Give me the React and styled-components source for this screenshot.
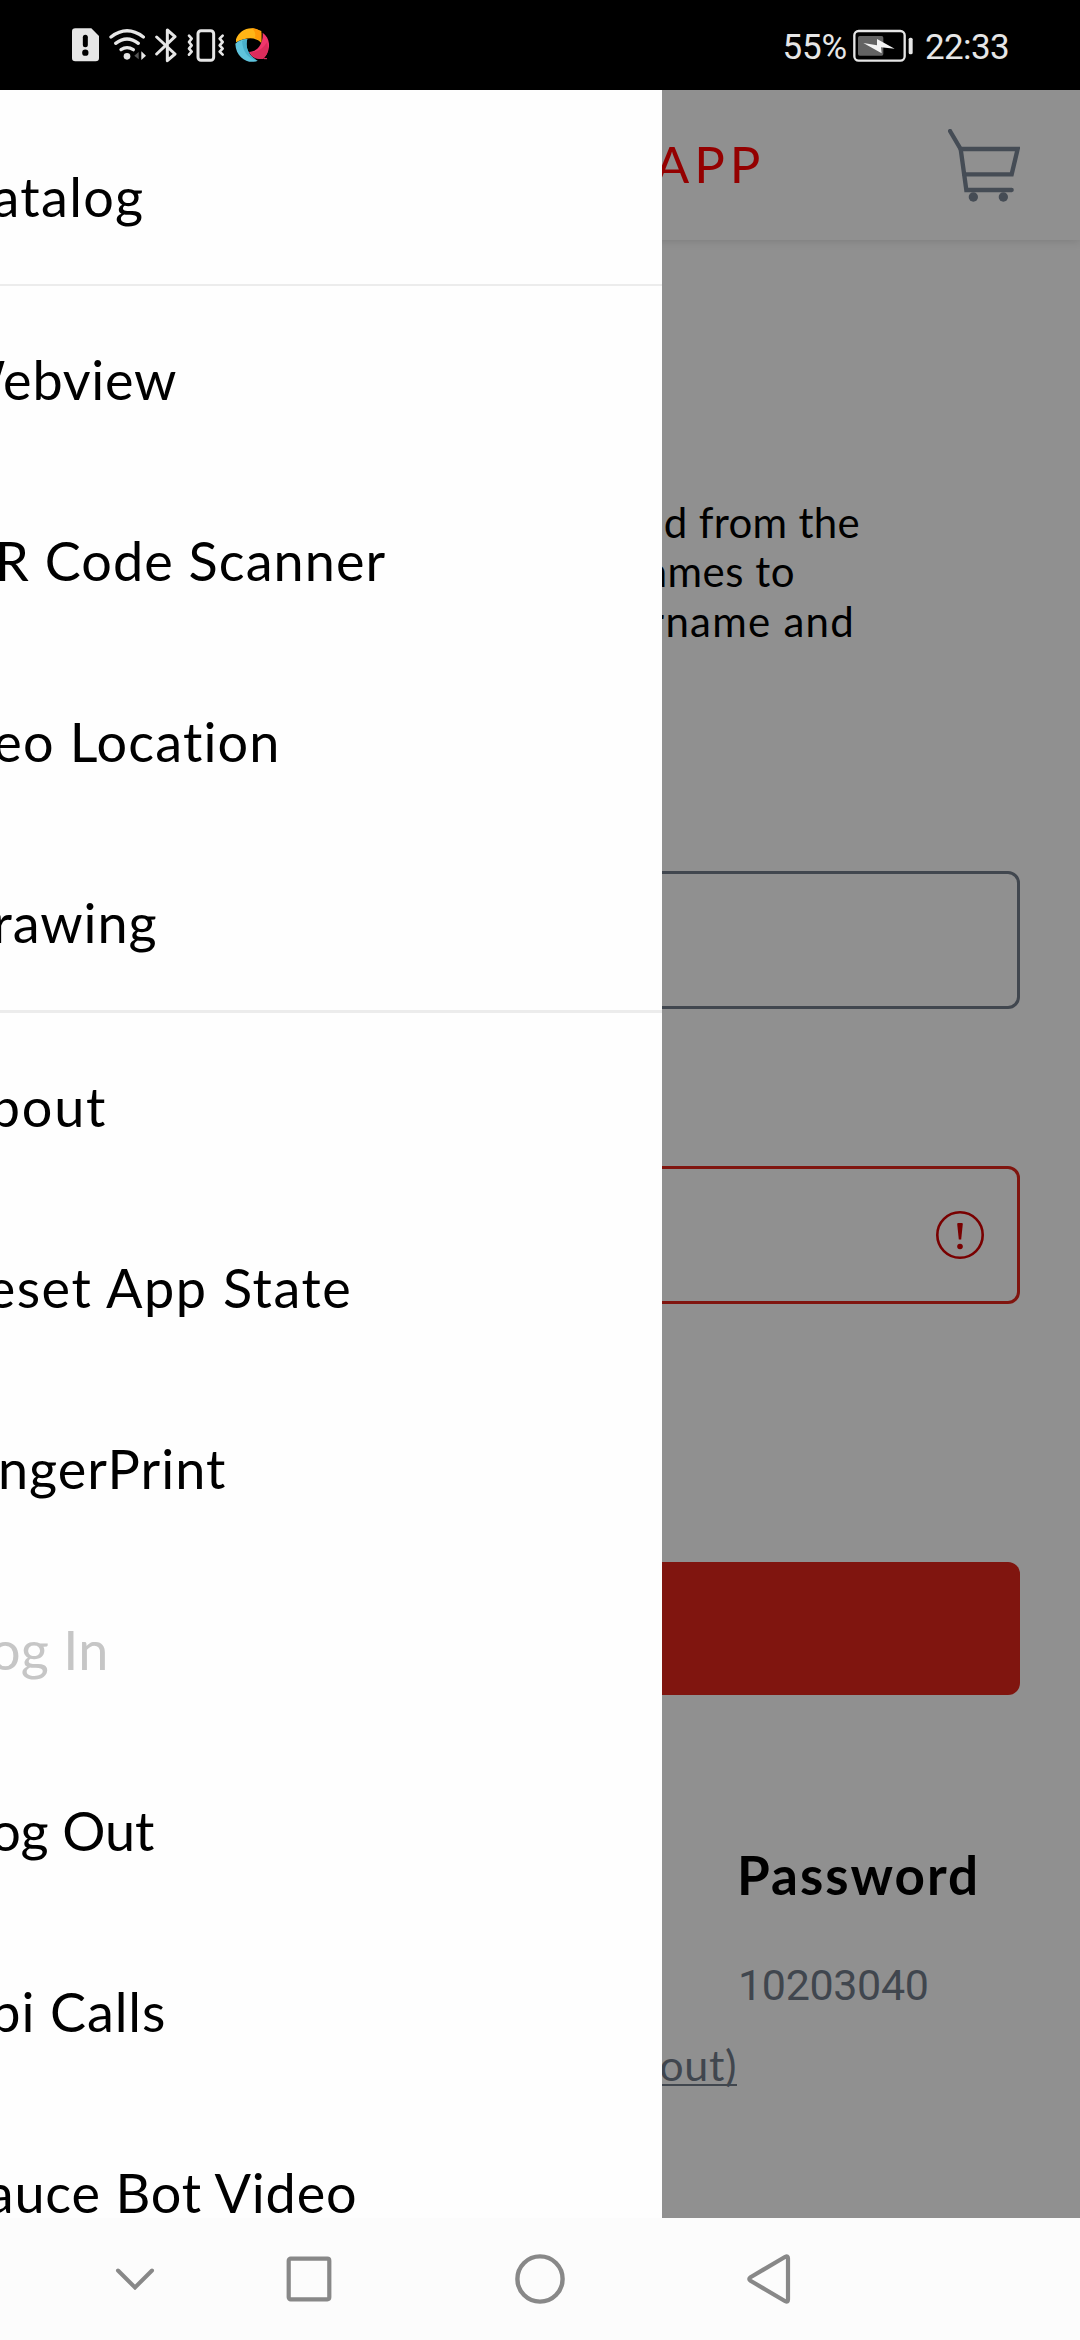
import React from 'react';
import styled, { createGlobalStyle } from 'styled-components';

const GlobalStyle = createGlobalStyle`
  * { box-sizing: border-box; }
  body { margin: 0; background: #000; }
  svg { display: block; flex: none; }
`;

const Phone = styled.div`
  display: flex;
  flex-direction: column;
  width: 1080px;
  height: 2340px;
  overflow: hidden;
  font-family: Lato, 'Open Sans', sans-serif;
  font-variant-ligatures: none;
  color: #000;
`;

/* ---- status bar ---- */
const StatusBar = styled.header`
  flex: none;
  display: flex;
  justify-content: space-between;
  height: 90px;
  padding: 0 71px 0 72px;
  background: #000;
  color: #e6e6e6;
`;
const StatusIcons = styled.div`
  display: flex;
  gap: 9.7px;
  padding-top: 26.7px;
`;
const StatusInfo = styled.div`
  display: flex;
  padding-top: 27px;
`;
const StatusText = styled.span`
  font: 400 35px/42px Roboto, sans-serif;
  letter-spacing: ${(p) => p.$tracking}px;
  white-space: nowrap;
`;
const BatterySlot = styled.span`
  margin: 2px 12px 0 6px;
`;

/* ---- app behind the drawer ---- */
const Main = styled.main`
  position: relative;
  flex: none;
  height: 2128px;
  overflow: hidden;
  background: #909090;
`;
const AppHeader = styled.div`
  display: flex;
  justify-content: flex-end;
  height: 150px;
  padding-right: 60px;
  box-shadow: 0 1px 9px rgba(0, 0, 0, 0.13);
`;
const AppTitle = styled.h1`
  margin: 43px 182.5px 0 0;
  font-size: 51px;
  font-weight: 400;
  line-height: 62px;
  letter-spacing: 5px;
  color: #940000;
`;
const CartSlot = styled.span`
  padding-top: 38.7px;
`;
const LoginForm = styled.section`
  display: flex;
  flex-direction: column;
  padding: 258.4px 60px 0;
`;
const Intro = styled.div`
  display: flex;
  flex-direction: column;
  align-items: flex-end;
  font-size: 42px;
  line-height: 49.1px;
  white-space: nowrap;
`;
const IntroLine = styled.span`
  margin-right: ${(p) => p.$inset}px;
  letter-spacing: ${(p) => p.$tracking}px;
`;
const Field = styled.div`
  display: flex;
  align-items: center;
  justify-content: flex-end;
  height: 138px;
  margin-top: ${(p) => p.$gap}px;
  padding-right: 33px;
  border: 3px solid ${(p) => (p.$error ? '#80150f' : '#41474f')};
  border-radius: 12px;
`;
const LoginButton = styled.div`
  height: 133px;
  margin-top: 258px;
  border-radius: 12px;
  background: #80150f;
`;
const Credentials = styled.div`
  display: grid;
  grid-template-columns: 677px 1fr;
  margin-top: 147px;
  white-space: nowrap;
`;
const PasswordTitle = styled.h2`
  grid-column: 2;
  margin: 0;
  font-size: 53px;
  font-weight: 700;
  line-height: 65px;
  letter-spacing: 2px;
`;
const PasswordValue = styled.span`
  grid-column: 2;
  margin: 52.6px 0 0 1px;
  font: 400 43px/50px Roboto, sans-serif;
  letter-spacing: -0.35px;
  color: #40464e;
`;
const LockedUser = styled.span`
  grid-column: 1;
  justify-self: end;
  margin-top: 30.4px;
  font-size: 43px;
  line-height: 50px;
  letter-spacing: 0.6px;
  color: #40464e;
  text-decoration: underline;
  text-decoration-thickness: 2px;
  text-underline-offset: 3px;
  text-decoration-skip-ink: none;
`;

/* ---- drawer, sliding over the app ---- */
const Drawer = styled.nav`
  position: absolute;
  inset: 0 auto 0 0;
  width: 662px;
  overflow: hidden;
  padding-top: 12.5px;
  background: #fefefe;
`;
const Divider = styled.div`
  height: 2.5px;
  background: #ececec;
`;
const MenuItem = styled.div`
  display: flex;
  align-items: center;
  height: 181px;
  padding-top: 6px;
  margin-left: ${(p) => p.$start}px;
  font-size: 54px;
  line-height: 65px;
  letter-spacing: ${(p) => p.$tracking}px;
  white-space: nowrap;
  color: ${(p) => (p.$disabled ? '#c6c6c6' : '#000')};
`;

/* ---- system navigation ---- */
const NavBar = styled.footer`
  flex: none;
  display: flex;
  align-items: center;
  height: 122px;
  padding-left: 115px;
  background: #fcfcfc;
`;
const NavKey = styled.span`
  margin-right: ${(p) => p.$gap}px;
`;

const SimIcon = () => (
  <svg width="27" height="36" viewBox="66 50 81 108">
    <path d="M76 54H124L147 77V143Q147 153 137 153H76Q66 153 66 143V64Q66 54 76 54Z" fill="#e6e6e6" />
    <path d="M106 81V103" stroke="#000" strokeWidth="15" strokeLinecap="round" />
    <circle cx="106" cy="127" r="9.5" fill="#000" />
  </svg>
);
const WifiIcon = () => (
  <svg width="37" height="36" viewBox="177 50 111 108">
    <g fill="none" stroke="#e6e6e6" strokeWidth="10" strokeLinecap="round">
      <path d="M183 80Q231 43 280 80" />
      <path d="M197 99Q231 73 265 99" />
      <path d="M213 118Q231 106 250 118" />
    </g>
    <circle cx="231" cy="138" r="10" fill="#e6e6e6" />
    <path d="M266 125V147L253 136Z" fill="#555" />
    <path d="M274 123V149L288 136Z" fill="#e6e6e6" />
  </svg>
);
const BluetoothIcon = () => (
  <svg width="22" height="36" viewBox="312 50 66 108">
    <path d="M317 80L372 131L349 151V59L372 79L317 131" fill="none" stroke="#e6e6e6" strokeWidth="9" strokeLinecap="round" strokeLinejoin="round" />
  </svg>
);
const VibrateIcon = () => (
  <svg width="38" height="36" viewBox="412 50 114 108">
    <g fill="none" stroke="#e6e6e6" strokeLinecap="round" strokeLinejoin="round">
      <rect x="445" y="61" width="47" height="89" rx="9" strokeWidth="9" />
      <path d="M418 76L426 85L418 95L426 105L418 115L426 124L418 133M519 76L510 85L519 95L510 105L519 115L510 124L519 133" strokeWidth="8" />
    </g>
  </svg>
);
const SwirlIcon = () => (
  <svg width="34" height="36" viewBox="552 50 102 108">
    <path d="M555 87C563 63 588 49 612 55L631 62V98C618 81 589 78 555 96Z" fill="#ffb516" />
    <path d="M601 54Q624 54 631 68V97Q623 87 611 83Q618 65 601 54Z" fill="#ff9a08" />
    <path d="M635 67C654 80 660 106 648 130L637 145C618 148 603 143 594 125C620 124 637 101 635 67Z" fill="#f1366c" />
    <path d="M597 125Q628 128 648 96Q658 127 637 145Q610 150 597 125Z" fill="#dc2c5c" />
    <path d="M553 100Q568 86 589 86C581 111 594 139 620 151C595 163 555 145 553 100Z" fill="#5fc4dd" />
    <path d="M573 92L589 86C581 111 594 139 620 151Q577 143 573 92Z" fill="#49afcb" />
    <path d="M639 145H648" stroke="#f1366c" strokeWidth="3" />
  </svg>
);
const BatteryIcon = () => (
  <svg width="60" height="33" viewBox="278 56 180 99">
    <rect x="282" y="62" width="151" height="89" rx="13" fill="none" stroke="#e6e6e6" strokeWidth="7" />
    <rect x="293" y="77" width="76" height="59" rx="5" fill="#636363" />
    <path d="M309 98L350 105V86L403 115L362 111L364 129Z" fill="#f4f4f4" />
    <rect x="445" y="82" width="12" height="50" rx="5" fill="#e6e6e6" />
  </svg>
);
const CartIcon = () => (
  <svg width="72" height="73" viewBox="924 131 216 219">
    <g fill="none" stroke="#454c55" strokeWidth="13" strokeLinecap="round">
      <path d="M930 137L962 191H1133L1115 267H973" />
      <path d="M962 191L979 314H1115" />
    </g>
    <circle cx="1000" cy="335" r="14" fill="#454c55" />
    <circle cx="1090" cy="335" r="14" fill="#454c55" />
  </svg>
);
const ErrorIcon = () => (
  <svg width="48" height="48" viewBox="0 0 48 48">
    <circle cx="24" cy="24" r="22.7" fill="none" stroke="#790000" strokeWidth="2.6" />
    <path d="M21.2 13Q21.2 12 22.2 12H25.8Q26.8 12 26.8 13L25.2 28.5H22.8Z" fill="#790000" />
    <circle cx="24" cy="35.5" r="2.8" fill="#790000" />
  </svg>
);
const ChevronIcon = () => (
  <svg width="40" height="22" viewBox="0 0 40 22">
    <path d="M3 2.5L20 19.5L37 2.5" fill="none" stroke="#888" strokeWidth="4" strokeLinecap="round" />
  </svg>
);
const SquareIcon = () => (
  <svg width="46" height="46" viewBox="0 0 46 46">
    <rect x="2.7" y="2.7" width="40.6" height="40.6" rx="2" fill="none" stroke="#888" strokeWidth="4.2" />
  </svg>
);
const CircleIcon = () => (
  <svg width="50" height="50" viewBox="0 0 50 50">
    <circle cx="25" cy="25" r="22.6" fill="none" stroke="#888" strokeWidth="4.4" />
  </svg>
);
const TriangleIcon = () => (
  <svg width="44" height="50" viewBox="0 0 44 50">
    <path d="M38.3 2.8Q41 1.5 41 4.5V45.5Q41 48.5 38.3 47.2L3.5 26.8Q1 25 3.5 23.2Z" fill="none" stroke="#888" strokeWidth="4.2" strokeLinejoin="round" />
  </svg>
);

const MENU = [
  [{ label: 'Catalog', start: -45, tracking: 1.35 }],
  [
    { label: 'Webview', start: -50.5, tracking: 0.75 },
    { label: 'QR Code Scanner', start: -49.4, tracking: 1.05 },
    { label: 'Geo Location', start: -47, tracking: 1.15 },
    { label: 'Drawing', start: -48.9, tracking: 0.9 },
  ],
  [
    { label: 'About', start: -48.4, tracking: 1.75 },
    { label: 'Reset App State', start: -47, tracking: 1.55 },
    { label: 'FingerPrint', start: -47.5, tracking: 1.03 },
    { label: 'Log In', start: -36, tracking: 0.3, disabled: true },
    { label: 'Log Out', start: -35.5, tracking: -0.1 },
    { label: 'Api Calls', start: -47.1, tracking: 0.9 },
    { label: 'Sauce Bot Video', start: -42.9, tracking: 0.8 },
  ],
];

export default function App() {
  return (
    <Phone>
      <GlobalStyle />
      <StatusBar>
        <StatusIcons>
          <SimIcon />
          <WifiIcon />
          <BluetoothIcon />
          <VibrateIcon />
          <SwirlIcon />
        </StatusIcons>
        <StatusInfo>
          <StatusText $tracking={-0.17}>55%</StatusText>
          <BatterySlot><BatteryIcon /></BatterySlot>
          <StatusText $tracking={-0.62}>22:33</StatusText>
        </StatusInfo>
      </StatusBar>
      <Main>
        <AppHeader>
          <AppTitle>APP</AppTitle>
          <CartSlot><CartIcon /></CartSlot>
        </AppHeader>
        <LoginForm>
          <Intro>
            <IntroLine $inset={160} $tracking={0.3}>d from the</IntroLine>
            <IntroLine $inset={225} $tracking={0.5}>ames to</IntroLine>
            <IntroLine $inset={165} $tracking={1.25}>rname and</IntroLine>
          </Intro>
          <Field $gap={225.3} />
          <Field $gap={157} $error><ErrorIcon /></Field>
          <LoginButton />
          <Credentials>
            <PasswordTitle>Password</PasswordTitle>
            <PasswordValue>10203040</PasswordValue>
            <LockedUser>out)</LockedUser>
          </Credentials>
        </LoginForm>
        <Drawer>
          {MENU.map((group, i) => (
            <React.Fragment key={group[0].label}>
              {i > 0 && <Divider />}
              {group.map((item) => (
                <MenuItem key={item.label} $start={item.start} $tracking={item.tracking} $disabled={item.disabled}>
                  {item.label}
                </MenuItem>
              ))}
            </React.Fragment>
          ))}
        </Drawer>
      </Main>
      <NavBar>
        <NavKey $gap={131}><ChevronIcon /></NavKey>
        <NavKey $gap={183}><SquareIcon /></NavKey>
        <NavKey $gap={182}><CircleIcon /></NavKey>
        <NavKey $gap={0}><TriangleIcon /></NavKey>
      </NavBar>
    </Phone>
  );
}
